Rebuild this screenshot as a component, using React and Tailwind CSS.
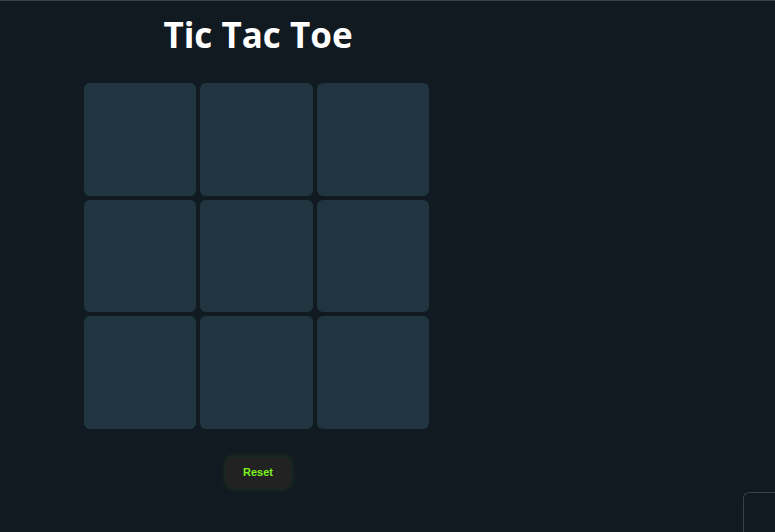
export default function App() {
  const cells = Array.from({ length: 9 });
  return (
    <div className="relative w-[775px] h-[532px] overflow-hidden bg-[#111a21] border-t border-[#3a3f44]">
      <div className="w-[513px] flex flex-col items-center">
        <h1
          className="ml-[3px] mt-[10px] text-white font-bold text-[35px] leading-[48px]"
          style={{ fontFamily: '"Open Sans", "Noto Sans", sans-serif' }}
        >
          Tic Tac Toe
        </h1>
        <div className="mt-[24px] grid grid-cols-[112px_113px_112px] grid-rows-[113px_112px_113px] gap-[4px]">
          {cells.map((_, i) => (
            <div key={i} className="bg-[#203540] rounded-[6px]" />
          ))}
        </div>
        <button
          className="ml-[3px] mt-[28px] w-[65px] h-[31px] rounded-[8px] bg-[#232222] text-[#7cf31c] text-[11px] font-bold shadow-[0_0_6px_rgba(127,224,31,0.18)]"
          style={{ fontFamily: '"Liberation Sans", Arial, sans-serif' }}
        >
          Reset
        </button>
      </div>
      <div className="absolute left-[743px] top-[491px] w-[60px] h-[60px] rounded-tl-[6px] border-t border-l border-[#3a4146]" />
    </div>
  );
}
